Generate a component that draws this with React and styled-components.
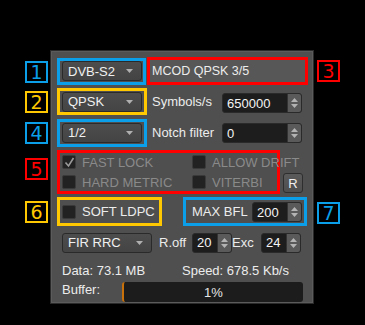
import React from 'react'
import styled, { createGlobalStyle } from 'styled-components'

const BLUE = '#0a9fe8'
const RED = '#ff0000'
const YELLOW = '#ffc800'

const Global = createGlobalStyle`
  html, body {
    margin: 0;
    background: #000;
  }
  body {
    font-family: "Liberation Sans", Arial, sans-serif;
    font-size: 13px;
    color: #e8e8e8;
  }
`

const Screen = styled.div`
  width: 365px;
  height: 325px;
  box-sizing: border-box;
  padding: 50px 0 0 25px;
  overflow: hidden;
`

const Layout = styled.div`
  display: grid;
  grid-template-columns: 23px 2px 264px 3px 23px;
  grid-template-rows: 4px 28px 27px 29px 44px 29px 75px;
  row-gap: 3px;
`

const Panel = styled.div`
  grid-column: 3;
  grid-row: 1 / -1;
  background: #4f4f4f;
  border: 1px solid #2a2a2a;
  box-shadow: inset 0 0 0 1px #5b5b5b;
`

const Callout = styled.div`
  grid-column: ${(p) => (p.$right ? 5 : 1)};
  grid-row: ${(p) => p.$row};
  align-self: ${(p) => (p.$top ? 'start' : 'center')};
  margin-top: ${(p) => p.$shift || 0}px;
  height: 22px;
  box-sizing: border-box;
  border: 2px solid ${(p) => p.$color};
  background: #000;
  color: ${(p) => p.$color};
  font: 19px/18px "DejaVu Sans", sans-serif;
  display: flex;
  align-items: center;
  justify-content: center;
`

const Row = styled.div`
  grid-column: 3;
  grid-row: ${(p) => p.$row};
  display: flex;
  align-items: ${(p) => p.$align || 'center'};
  padding-left: 7px;
`

const Highlight = styled.div`
  box-sizing: border-box;
  width: ${(p) => p.$w}px;
  height: ${(p) => p.$h || 28}px;
  flex: none;
  border: 3px solid ${(p) => p.$color};
  background: ${(p) => p.$fill || 'transparent'};
  display: flex;
  align-items: center;
  padding: ${(p) => p.$pad || '0 1px 0 2px'};
  margin-left: ${(p) => p.$ml || 0}px;
`

const Combo = styled.div`
  box-sizing: border-box;
  width: ${(p) => p.$w || 80}px;
  height: 20px;
  flex: none;
  display: flex;
  align-items: center;
  justify-content: space-between;
  padding: 0 8px 0 5px;
  border: 1px solid #2a2a2a;
  border-radius: 3px;
  background: linear-gradient(#4d4d4d, #444);
  color: #f0f0f0;
`

const Text = styled.span`
  flex: none;
  white-space: nowrap;
  font-size: ${(p) => p.$size || 13}px;
  color: ${(p) => (p.$dim ? '#8a8a8a' : '#ececec')};
  margin-left: ${(p) => p.$ml || 0}px;
  width: ${(p) => (p.$w ? `${p.$w}px` : 'auto')};
`

const Spin = styled.div`
  box-sizing: border-box;
  width: ${(p) => p.$w}px;
  height: 20px;
  flex: none;
  display: flex;
  margin-left: ${(p) => (p.$ml === 'auto' ? 'auto' : `${p.$ml || 0}px`)};
  margin-right: ${(p) => p.$mr || 0}px;
  margin-top: ${(p) => p.$mt || 0}px;
  border: 1px solid #2a2a2a;
  border-radius: 3px;
  background: #1d1d1d;
`

const SpinValue = styled.span`
  flex: 1;
  display: flex;
  align-items: center;
  padding-left: 4px;
  color: #f4f4f4;
`

const SpinButtons = styled.div`
  width: 13px;
  flex: none;
  background: #5a5a5a;
  border-left: 1px solid #333;
  border-radius: 0 2px 2px 0;
  display: flex;
  flex-direction: column;
  align-items: center;
  justify-content: center;
  gap: 2px;
`

const Checks = styled.div`
  display: grid;
  grid-template-columns: 130px auto;
  grid-template-rows: 14px 14px;
  row-gap: 6px;
  align-self: start;
  padding-top: 2px;
`

const CheckItem = styled.label`
  display: flex;
  align-items: center;
  gap: 6px;
`

const Box = styled.span`
  width: 14px;
  height: 14px;
  box-sizing: border-box;
  flex: none;
  background: #222;
  border: 1px solid #3a3a3a;
  border-radius: 2px;
  display: flex;
  align-items: center;
  justify-content: center;
`

const SmallButton = styled.div`
  box-sizing: border-box;
  width: 20px;
  height: 20px;
  margin: 0 0 1px 3px;
  align-self: end;
  display: flex;
  align-items: center;
  justify-content: center;
  border: 1px solid #2e2e2e;
  border-radius: 3px;
  background: linear-gradient(#5a5a5a, #4e4e4e);
  color: #f0f0f0;
`

const Bottom = styled.div`
  grid-column: 3;
  grid-row: 7;
  display: flex;
  flex-direction: column;
  padding: 4px 0 0 12px;
`

const Line = styled.div`
  display: flex;
  align-items: ${(p) => p.$align || 'center'};
  height: ${(p) => p.$h}px;
  margin-top: ${(p) => p.$mt || 0}px;
  line-height: 16px;
`

const Progress = styled.div`
  box-sizing: border-box;
  width: 181px;
  height: 20px;
  border-radius: 3px;
  background: #1c1c1c;
  border-left: 2px solid #c8700a;
  display: flex;
  align-items: center;
  justify-content: center;
  padding-top: 2px;
  color: #e6e6e6;
`

const Arrow = () => (
  <svg width="7" height="4" viewBox="0 0 7 4">
    <path d="M0 0h7L3.5 4z" fill="#b0b0b0" />
  </svg>
)

const SpinBox = ({ value, w, ...rest }) => (
  <Spin $w={w} {...rest}>
    <SpinValue>{value}</SpinValue>
    <SpinButtons>
      <svg width="7" height="4" viewBox="0 0 7 4">
        <path d="M0 4L3.5 0L7 4z" fill="#b4b4b4" />
      </svg>
      <svg width="7" height="4" viewBox="0 0 7 4">
        <path d="M0 0h7L3.5 4z" fill="#b4b4b4" />
      </svg>
    </SpinButtons>
  </Spin>
)

const Check = ({ label, checked, dim }) => (
  <CheckItem>
    <Box>
      {checked && (
        <svg width="11" height="11" viewBox="0 0 11 11">
          <path d="M1.5 5.5L4.5 9L9.5 1" fill="none" stroke="#9a9a9a" strokeWidth="1.6" />
        </svg>
      )}
    </Box>
    <Text $dim={dim}>{label}</Text>
  </CheckItem>
)

const Select = ({ label, w }) => (
  <Combo $w={w}>
    <span>{label}</span>
    <Arrow />
  </Combo>
)

export default function App() {
  return (
    <Screen>
      <Global />
      <Layout>
        <Panel />

        <Callout $row={2} $color={BLUE} $shift={1}>1</Callout>
        <Callout $row={2} $color={RED} $right>3</Callout>
        <Callout $row={3} $color={YELLOW}>2</Callout>
        <Callout $row={4} $color={BLUE}>4</Callout>
        <Callout $row={5} $color={RED} $top $shift={8}>5</Callout>
        <Callout $row={6} $color={YELLOW}>6</Callout>
        <Callout $row={6} $color={BLUE} $right $shift={2}>7</Callout>

        <Row $row={2}>
          <Highlight $w={89} $h={27} $color={BLUE}>
            <Select label="DVB-S2" />
          </Highlight>
          <Highlight $w={161} $color={RED} $ml={1} $fill="#575757" $pad="0 0 0 2px">
            <Text $size={12.5}>MCOD QPSK 3/5</Text>
          </Highlight>
        </Row>

        <Row $row={3}>
          <Highlight $w={90} $h={27} $color={YELLOW}>
            <Select label="QPSK" />
          </Highlight>
          <Text $ml={5}>Symbols/s</Text>
          <SpinBox value="650000" w={80} $ml="auto" $mr={12} $mt={3} />
        </Row>

        <Row $row={4}>
          <Highlight $w={90} $color={BLUE}>
            <Select label="1/2" />
          </Highlight>
          <Text $ml={5}>Notch filter</Text>
          <SpinBox value="0" w={80} $ml="auto" $mr={12} $mt={1} />
        </Row>

        <Row $row={5} $align="stretch">
          <Highlight $w={223} $h={44} $color={RED} $pad="0 0 0 2px">
            <Checks>
              <Check label="FAST LOCK" checked dim />
              <Check label="ALLOW DRIFT" dim />
              <Check label="HARD METRIC" dim />
              <Check label="VITERBI" dim />
            </Checks>
          </Highlight>
          <SmallButton>R</SmallButton>
        </Row>

        <Row $row={6}>
          <Highlight $w={105} $h={29} $color={YELLOW} $pad="0 0 0 2px">
            <CheckItem>
              <Box />
              <Text>SOFT LDPC</Text>
            </CheckItem>
          </Highlight>
          <Highlight $w={124} $h={29} $color={BLUE} $ml={21} $pad="0 2px 0 6px">
            <Text>MAX BFL</Text>
            <SpinBox value="200" w={50} $ml="auto" $mt={1} />
          </Highlight>
        </Row>

        <Bottom>
          <Line $h={20}>
            <Select label="FIR RRC" w={90} />
            <Text $ml={7} $w={33}>R.off</Text>
            <SpinBox value="20" w={40} />
            <Text $w={29}>Exc</Text>
            <SpinBox value="24" w={40} />
          </Line>
          <Line $h={16} $mt={10}>
            <Text $w={120}>Data: 73.1 MB</Text>
            <Text>Speed: 678.5 Kb/s</Text>
          </Line>
          <Line $h={20} $mt={3} $align="start">
            <Text $w={60}>Buffer:</Text>
            <Progress>1%</Progress>
          </Line>
        </Bottom>
      </Layout>
    </Screen>
  )
}
